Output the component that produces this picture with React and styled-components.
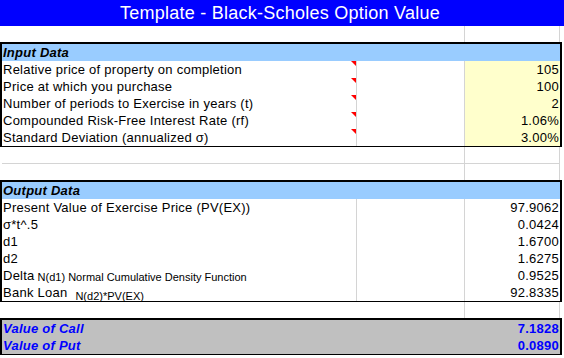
import styled, { createGlobalStyle } from 'styled-components';

const GRID = '#d4d4d4';
const FILLS = {
  plain: '#ffffff',
  header: '#99ccff',
  input: '#ffffcc',
  total: '#c0c0c0',
};

const GlobalStyle = createGlobalStyle`
  html, body {
    margin: 0;
    padding: 0;
    background: #ffffff;
  }
  body {
    font-family: "Liberation Sans", Arial, sans-serif;
    font-size: 13px;
    color: #000000;
  }
`;

const Sheet = styled.div`
  width: 564px;
  height: 358px;
  overflow: hidden;
`;

const TitleBar = styled.div`
  height: 26px;
  background: #0000ff;
  color: #ffffff;
  font-size: 18px;
  letter-spacing: 0.25px;
  line-height: 27px;
  text-align: center;
  padding-right: 4px;
`;

const Box = styled.div`
  width: 562px;
  box-sizing: border-box;
  border: 2px solid #000000;
`;

const Row = styled.div`
  display: grid;
  grid-template-columns: 355px 108px 95px;
  height: ${(p) => (p.$last ? 16 : 17)}px;
`;

const EmptyRow = styled(Row)`
  padding-left: 2px;
  width: 562px;
`;

const tone = (p) => (p.$fill && p.$fill !== 'plain' ? FILLS[p.$fill] : GRID);

const Cell = styled.div`
  position: relative;
  box-sizing: border-box;
  background: ${(p) => FILLS[p.$fill || 'plain']};
  border-bottom: ${(p) => (p.$last ? 'none' : `1px solid ${tone(p)}`)};
  border-right: ${(p) => (p.$edge ? 'none' : `1px solid ${tone(p)}`)};
  padding: 1px 1px 0 1px;
  line-height: 16px;
  letter-spacing: 0.25px;
  white-space: nowrap;
  text-align: ${(p) => (p.$num ? 'right' : 'left')};
  font-weight: ${(p) => (p.$bold ? 700 : 400)};
  font-style: ${(p) => (p.$italic ? 'italic' : 'normal')};
  color: ${(p) => (p.$blue ? '#0000ff' : '#000000')};

  ${(p) =>
    p.$comment &&
    `
    &::after {
      content: '';
      position: absolute;
      top: 0;
      right: 0;
      width: 0;
      height: 0;
      border-top: 5px solid #ff0000;
      border-left: 5px solid transparent;
    }
  `}
`;

const Note = styled.span`
  font-size: 11px;
  letter-spacing: 0;
  margin-left: ${(p) => p.$gap || 0}px;
  position: relative;
  top: ${(p) => p.$drop || 1}px;
`;

const inputs = [
  ['Relative price of property on completion', '105'],
  ['Price at which you purchase', '100'],
  ['Number of periods to Exercise in years (t)', '2'],
  ['Compounded Risk-Free Interest Rate (rf)', '1.06%'],
  ['Standard Deviation (annualized σ)', '3.00%'],
];

const outputs = [
  ['Present Value of Exercise Price (PV(EX))', '97.9062'],
  ['σ*t^.5', '0.0424'],
  ['d1', '1.6700'],
  ['d2', '1.6275'],
  [
    <>
      Delta<Note $gap={3}>N(d1) Normal Cumulative Density Function</Note>
    </>,
    '0.9525',
  ],
  [
    <>
      Bank Loan<Note $gap={8} $drop={3}>N(d2)*PV(EX)</Note>
    </>,
    '92.8335',
  ],
];

const Blank = ({ last }) => (
  <EmptyRow $last={last}>
    <Cell $last={last} $edge />
    <Cell $last={last} />
    <Cell $last={last} />
  </EmptyRow>
);

const HeaderRow = ({ title }) => (
  <Row>
    <Cell $fill="header" $bold $italic>
      {title}
    </Cell>
    <Cell $fill="header" />
    <Cell $fill="header" $edge />
  </Row>
);

const App = () => {
  return (
    <Sheet>
      <GlobalStyle />
      <TitleBar>Template - Black-Scholes Option Value</TitleBar>
      <Blank last />

      <Box>
        <HeaderRow title="Input Data" />
        {inputs.map(([label, value], i) => {
          const last = i === inputs.length - 1;
          return (
            <Row key={i} $last={last}>
              <Cell $last={last} $comment>
                {label}
              </Cell>
              <Cell $last={last} />
              <Cell $last={last} $fill="input" $edge $num>
                {value}
              </Cell>
            </Row>
          );
        })}
      </Box>

      <Blank />
      <Blank last />

      <Box>
        <HeaderRow title="Output Data" />
        {outputs.map(([label, value], i) => {
          const last = i === outputs.length - 1;
          return (
            <Row key={i} $last={last}>
              <Cell $last={last}>{label}</Cell>
              <Cell $last={last} />
              <Cell $last={last} $edge $num>
                {value}
              </Cell>
            </Row>
          );
        })}
      </Box>

      <Blank last />

      <Box>
        <Row>
          <Cell $fill="total" $blue $bold $italic>
            Value of Call
          </Cell>
          <Cell $fill="total" />
          <Cell $fill="total" $blue $bold $num $edge>
            7.1828
          </Cell>
        </Row>
        <Row $last>
          <Cell $fill="total" $last $blue $bold $italic>
            Value of Put
          </Cell>
          <Cell $fill="total" $last />
          <Cell $fill="total" $last $blue $bold $num $edge>
            0.0890
          </Cell>
        </Row>
      </Box>
    </Sheet>
  );
};

export default App;
